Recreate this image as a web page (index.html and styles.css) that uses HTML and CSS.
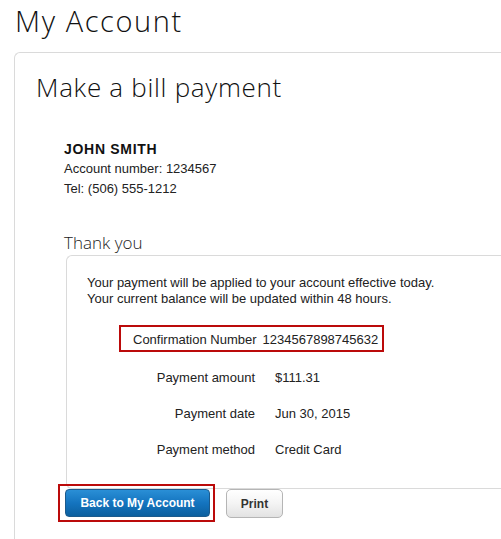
FILE: index.html
```html
<!DOCTYPE html>
<html lang="en">
<head>
<meta charset="utf-8">
<title>My Account</title>
<link rel="stylesheet" href="styles.css">
</head>
<body>
<h1 class="page-title">My Account</h1>
<section class="card">
  <h2 class="card-title">Make a bill payment</h2>
  <div class="customer">
    <div class="customer-name">JOHN SMITH</div>
    <div class="customer-line">Account number: 1234567</div>
    <div class="customer-line">Tel: (506) 555-1212</div>
  </div>
  <h3 class="thanks-title">Thank you</h3>
  <div class="result">
    <p class="result-note">Your payment will be applied to your account effective today.<br>Your current balance will be updated within 48 hours.</p>
    <div class="confirm">
      <span class="confirm-label">Confirmation Number</span>
      <span class="confirm-value">1234567898745632</span>
    </div>
    <div class="row"><span class="row-label">Payment amount</span><span class="row-value">$111.31</span></div>
    <div class="row"><span class="row-label">Payment date</span><span class="row-value">Jun 30, 2015</span></div>
    <div class="row"><span class="row-label">Payment method</span><span class="row-value">Credit Card</span></div>
  </div>
  <div class="actions">
    <div class="primary-wrap">
      <button class="btn btn-primary" type="button">Back to My Account</button>
      <span class="highlight"></span>
    </div>
    <button class="btn btn-secondary" type="button">Print</button>
  </div>
</section>
</body>
</html>
```
FILE: styles.css
```css
html, body {
  margin: 0;
  padding: 0;
  background: #ffffff;
  overflow: hidden;
}
body {
  font-family: "Liberation Sans", Arial, sans-serif;
  color: #1a1a1a;
  width: 501px;
  height: 539px;
}
.page-title {
  margin: 0;
  padding: 1px 0 0 15px;
  font-family: "Open Sans", "Lato", sans-serif;
  font-weight: 300;
  font-size: 29px;
  line-height: 40px;
  letter-spacing: 1.6px;
  color: #111;
}
.card {
  margin: 11px 0 0 14px;
  width: 600px;
  height: 600px;
  border: 1px solid #dadada;
  border-right: none;
  border-radius: 6px 0 0 0;
  padding: 18px 0 0 21px;
  box-sizing: border-box;
}
.card-title {
  margin: 0;
  font-family: "Open Sans", "Lato", sans-serif;
  font-weight: 300;
  font-size: 26px;
  line-height: 32px;
  letter-spacing: 0.7px;
  color: #111;
}
.customer {
  margin-top: 36px;
  padding-left: 28px;
}
.customer-name {
  font-weight: 700;
  font-size: 14px;
  line-height: 20px;
  letter-spacing: 0.7px;
  color: #111;
}
.customer-line {
  font-size: 13px;
  line-height: 20px;
  color: #222;
}
.thanks-title {
  margin: 33px 0 0 28px;
  font-family: "Open Sans", "Lato", sans-serif;
  font-weight: 300;
  font-size: 17px;
  line-height: 22px;
  color: #222;
}
.result {
  margin: 1px 0 0 30px;
  border: 1px solid #dadada;
  border-right: none;
  border-radius: 6px 0 0 6px;
  padding: 19px 0 20px 20px;
  font-size: 13px;
  color: #222;
}
.result-note {
  margin: 0;
  line-height: 16px;
}
.confirm {
  display: flex;
  width: fit-content;
  margin: 18px 0 0 32px;
  border: 2px solid #bb0a0a;
  padding: 3px 4px 0 12px;
  line-height: 20px;
  gap: 6px;
}
.row {
  display: flex;
  line-height: 36px;
  gap: 20px;
}
.confirm + .row {
  margin-top: 8px;
}
.row-label {
  width: 168px;
  text-align: right;
}
.actions {
  display: flex;
  gap: 16px;
  margin-left: 29px;
}
.primary-wrap {
  position: relative;
}
.btn {
  font-family: "Liberation Sans", Arial, sans-serif;
  font-weight: 700;
  font-size: 12px;
  box-sizing: border-box;
  margin: 0;
  cursor: pointer;
}
.btn-primary {
  width: 145px;
  height: 28px;
  border: 1px solid #1c5a8c;
  border-radius: 4px;
  color: #ffffff;
  background: linear-gradient(to bottom, #2a8fd6 0%, #1474bf 50%, #0b5f9f 100%);
}
.btn-secondary {
  width: 57px;
  height: 29px;
  border: 1px solid #b5b5b5;
  border-radius: 5px;
  color: #333;
  background: linear-gradient(to bottom, #ffffff 0%, #f4f4f4 50%, #e2e2e2 100%);
}
.highlight {
  position: absolute;
  left: -7px;
  top: -5px;
  width: 157px;
  height: 38px;
  box-sizing: border-box;
  border: 2px solid #bb0a0a;
  pointer-events: none;
}
```
